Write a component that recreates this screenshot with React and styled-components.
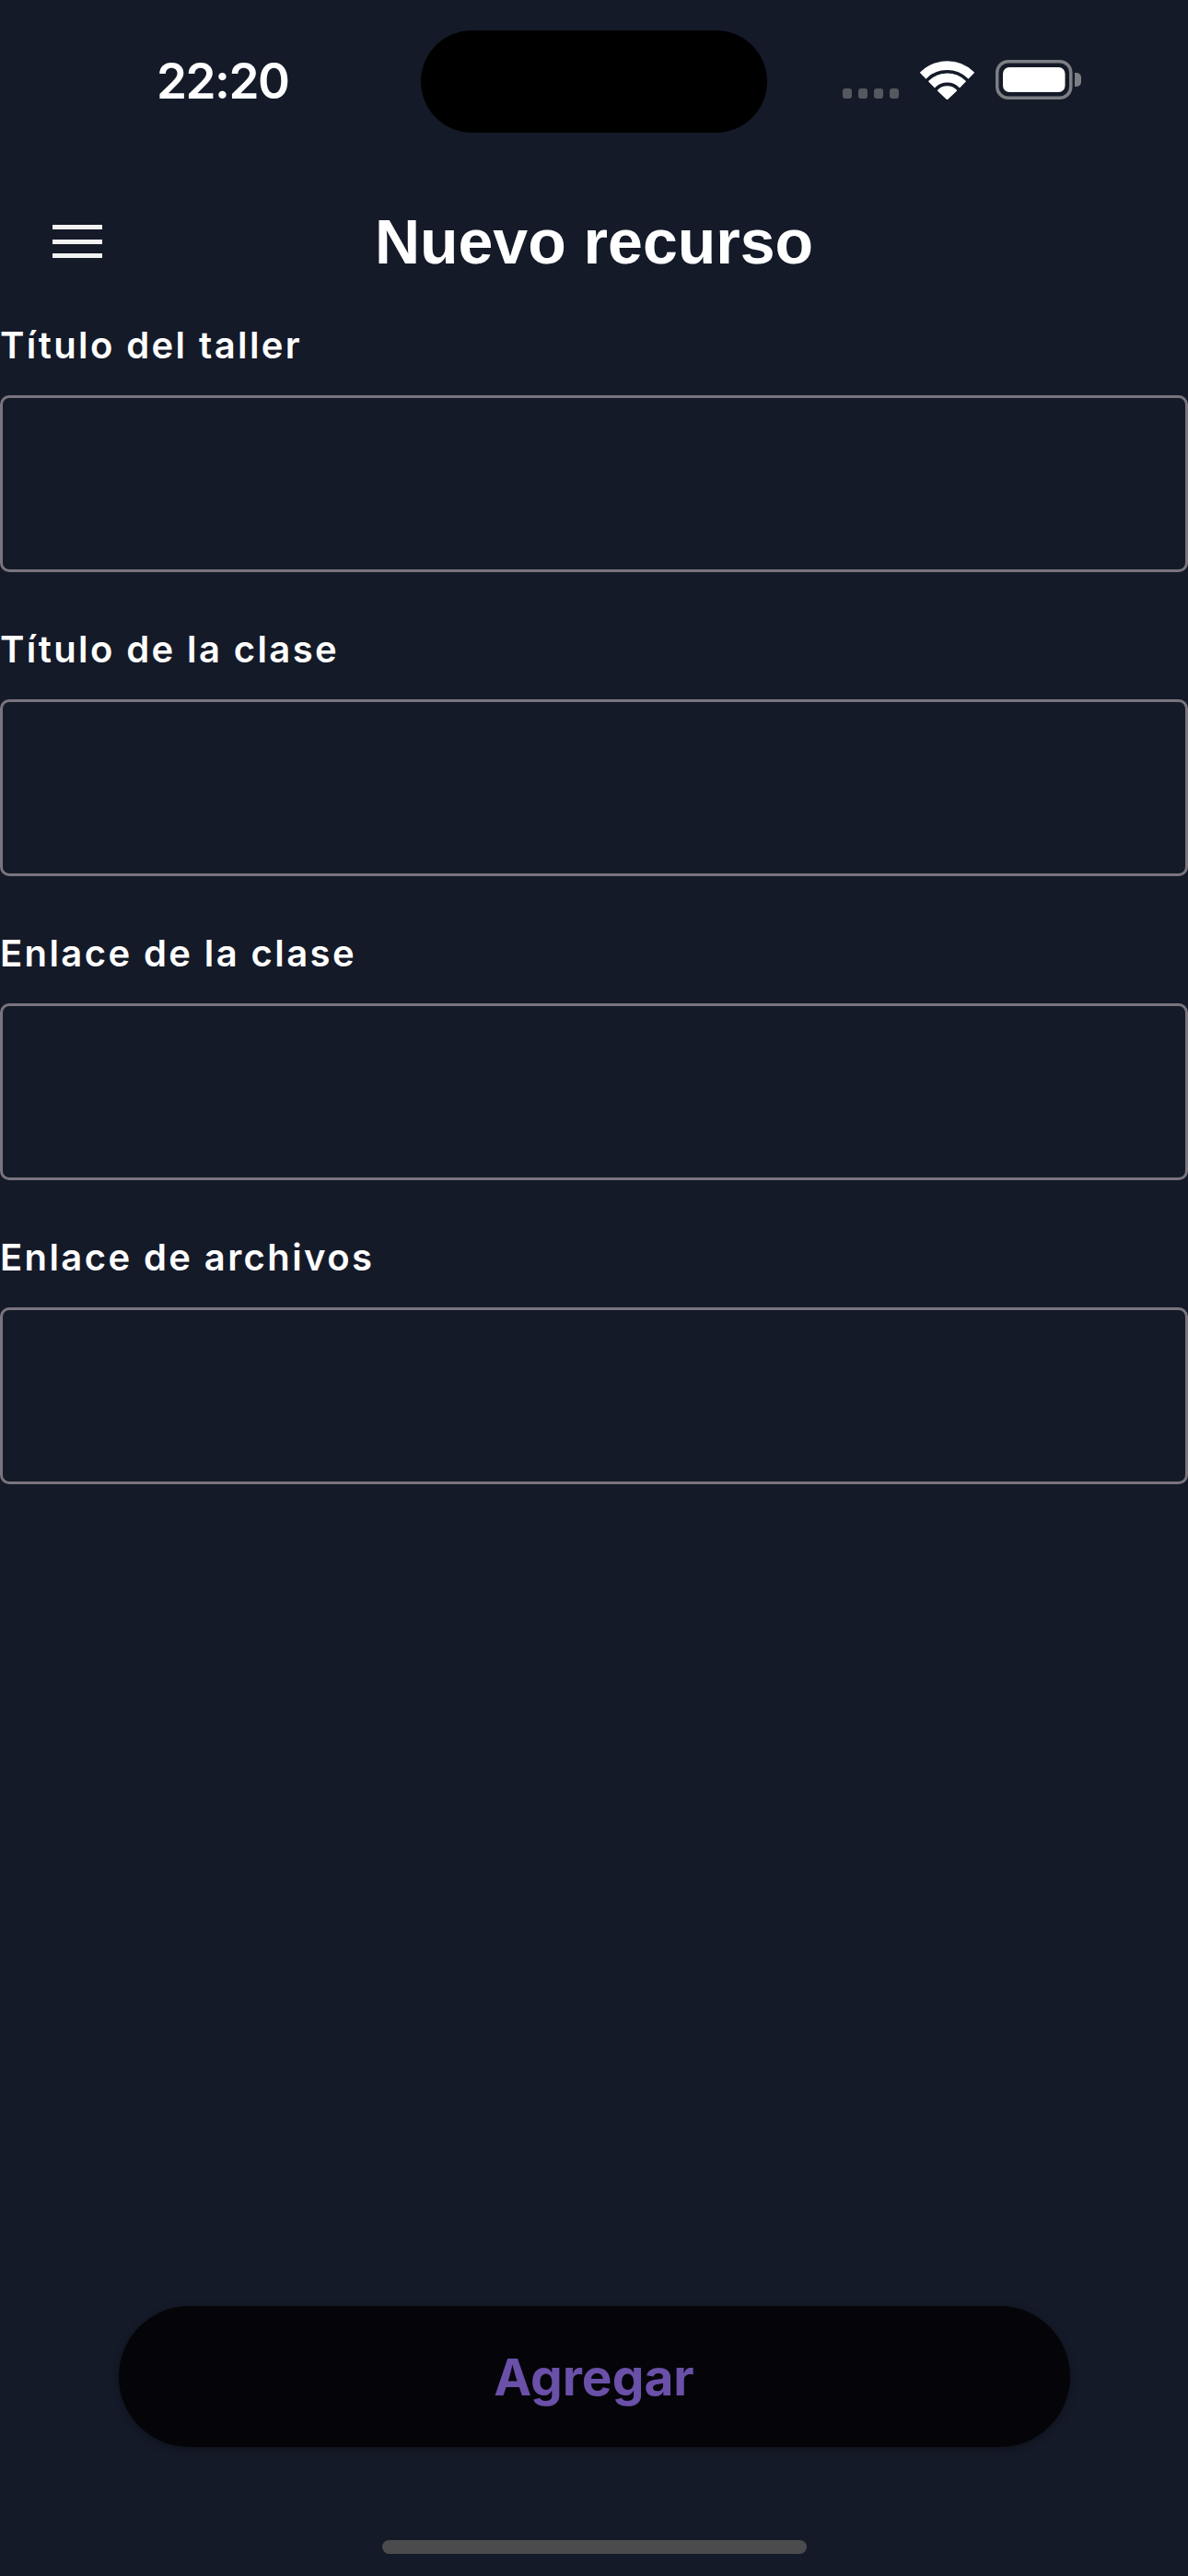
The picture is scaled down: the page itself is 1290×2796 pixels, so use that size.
import React from "react";
import styled, { createGlobalStyle } from "styled-components";

const GlobalStyle = createGlobalStyle`
  html, body {
    margin: 0;
    padding: 0;
    background: #141a28;
  }
  * {
    box-sizing: border-box;
  }
`;

const Screen = styled.div`
  width: 1290px;
  min-height: 2796px;
  background: #141a28;
  display: flex;
  flex-direction: column;
  font-family: Inter, "Noto Sans", sans-serif;
  color: #ffffff;
`;

const StatusBar = styled.div`
  display: grid;
  grid-template-columns: 1fr 376px 1fr;
  align-items: center;
  padding-top: 33px;
  height: 176px;
  align-content: start;
`;

const Time = styled.div`
  justify-self: start;
  padding-left: 170px;
  font-size: 53px;
  font-weight: 600;
  letter-spacing: -1.5px;
  line-height: 111px;
`;

const Island = styled.div`
  height: 111px;
  background: #000000;
  border-radius: 56px;
`;

const StatusIcons = styled.div`
  display: flex;
  align-items: flex-end;
  gap: 23px;
  padding-left: 82px;
  height: 111px;
  padding-bottom: 36px;
`;

const Dots = styled.div`
  display: flex;
  gap: 7px;
  padding-bottom: 1px;
`;

const Dot = styled.span`
  width: 10px;
  height: 11px;
  border-radius: 3px;
  background: #55585f;
`;

const Header = styled.header`
  display: grid;
  grid-template-columns: 1fr auto 1fr;
  align-items: center;
  height: 172px;
`;

const MenuButton = styled.button`
  justify-self: start;
  margin-left: 57px;
  padding: 0;
  background: none;
  border: none;
  display: flex;
  flex-direction: column;
  gap: 10.5px;
  cursor: pointer;
`;

const MenuBar = styled.span`
  display: block;
  width: 54px;
  height: 5px;
  background: #f2f2f2;
`;

const Title = styled.h1`
  margin: 0;
  font-family: "Liberation Sans", Arial, sans-serif;
  font-weight: 700;
  font-size: 68px;
  color: #ffffff;
`;

const Form = styled.div`
  display: flex;
  flex-direction: column;
  gap: 60px;
  padding-top: 3px;
`;

const Field = styled.label`
  display: flex;
  flex-direction: column;
  gap: 30px;
`;

const Label = styled.span`
  font-size: 40px;
  line-height: 48px;
  font-weight: 600;
  color: #ffffff;
  letter-spacing: 2.4px;
`;

const Input = styled.input`
  width: 100%;
  height: 192px;
  margin: 0;
  background: transparent;
  border: 3px solid #79747e;
  border-radius: 10px;
  color: #ffffff;
  font-family: inherit;
  font-size: 40px;
  padding: 0 24px;
  outline: none;
`;

const Footer = styled.div`
  margin-top: auto;
  display: flex;
  flex-direction: column;
  align-items: center;
  padding-bottom: 24px;
`;

const AddButton = styled.button`
  width: 1033px;
  height: 153px;
  border: none;
  border-radius: 77px;
  background: #050509;
  box-shadow: 0 2px 8px rgba(0, 0, 0, 0.35);
  color: #6a50a8;
  font-family: Inter, "Noto Sans", sans-serif;
  font-weight: 700;
  font-size: 55px;
  cursor: pointer;
  margin-bottom: 101px;
`;

const HomeIndicator = styled.div`
  width: 461px;
  height: 15px;
  border-radius: 8px;
  background: #4b4b4d;
`;

const WifiIcon = () => (
  <svg width="59" height="42" viewBox="0 0 59 42">
    <g fill="#ffffff" stroke="#ffffff" strokeWidth="1.5" strokeLinejoin="round">
      <path d="M0.8 12.8 A41 41 0 0 1 58.2 12.8 L52.6 18.6 A33 33 0 0 0 6.4 18.6 Z" />
      <path d="M9.9 22.3 A28 28 0 0 1 49.1 22.3 L43 28.4 A19 19 0 0 0 16 28.4 Z" />
      <path d="M19.6 32.2 A14 14 0 0 1 39.4 32.2 L29.5 41.5 Z" />
    </g>
  </svg>
);

const BatteryIcon = () => (
  <svg width="94" height="43" viewBox="0 0 94 43">
    <rect x="1.75" y="1.75" width="80" height="39.5" rx="12" fill="none" stroke="#7c7e84" strokeWidth="3.5" />
    <rect x="8" y="8" width="67.5" height="27" rx="7" fill="#ffffff" />
    <path d="M86 14 h2 a5 5 0 0 1 5 5 v5 a5 5 0 0 1 -5 5 h-2 Z" fill="#7c7e84" />
  </svg>
);

const fields = [
  "Título del taller",
  "Título de la clase",
  "Enlace de la clase",
  "Enlace de archivos",
];

export default function App() {
  return (
    <Screen>
      <GlobalStyle />
      <StatusBar>
        <Time>22:20</Time>
        <Island />
        <StatusIcons>
          <Dots>
            <Dot />
            <Dot />
            <Dot />
            <Dot />
          </Dots>
          <WifiIcon />
          <BatteryIcon />
        </StatusIcons>
      </StatusBar>

      <Header>
        <MenuButton aria-label="Menú">
          <MenuBar />
          <MenuBar />
          <MenuBar />
        </MenuButton>
        <Title>Nuevo recurso</Title>
        <span />
      </Header>

      <Form>
        {fields.map((f) => (
          <Field key={f}>
            <Label>{f}</Label>
            <Input type="text" />
          </Field>
        ))}
      </Form>

      <Footer>
        <AddButton>Agregar</AddButton>
        <HomeIndicator />
      </Footer>
    </Screen>
  );
}
